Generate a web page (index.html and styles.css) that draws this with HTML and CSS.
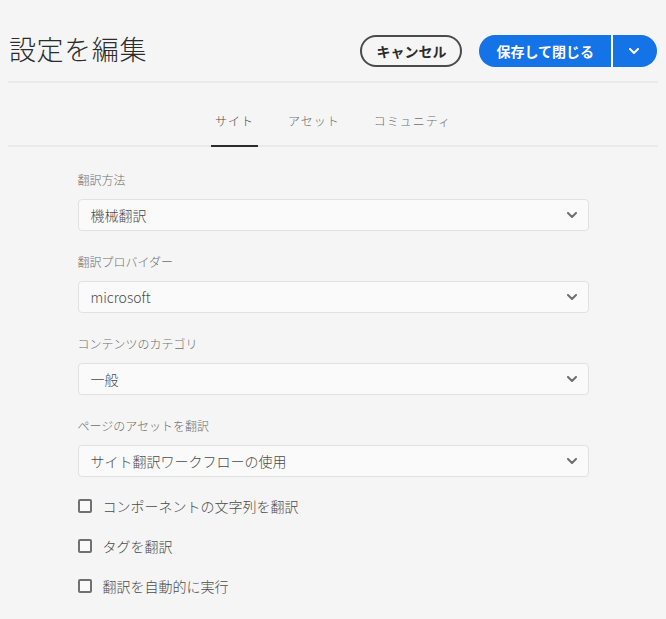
FILE: index.html
```html
<!DOCTYPE html>
<html lang="ja">
<head>
<meta charset="utf-8">
<title>設定を編集</title>
<link rel="stylesheet" href="styles.css">
</head>
<body>
<div class="page">
  <header class="header">
    <h1 class="title">設定を編集</h1>
    <div class="actions">
      <button class="btn-cancel" type="button">キャンセル</button>
      <div class="save-group">
        <button class="btn-save" type="button">保存して閉じる</button>
        <button class="btn-more" type="button" aria-label="その他">
          <svg width="10" height="6" viewBox="0 0 10 6"><path d="M1 1 L5 5 L9 1" fill="none" stroke="#fff" stroke-width="2" stroke-linecap="round" stroke-linejoin="round"/></svg>
        </button>
      </div>
    </div>
  </header>

  <nav class="tabs">
    <div class="tab active">サイト</div>
    <div class="tab">アセット</div>
    <div class="tab">コミュニティ</div>
  </nav>

  <form class="form">
    <div class="field">
      <div class="label">翻訳方法</div>
      <div class="select"><span class="value">機械翻訳</span><svg class="chev" width="10" height="6" viewBox="0 0 10 6"><path d="M1 1 L5 5 L9 1" fill="none" stroke="#6e6e6e" stroke-width="2" stroke-linecap="round" stroke-linejoin="round"/></svg></div>
    </div>
    <div class="field">
      <div class="label">翻訳プロバイダー</div>
      <div class="select"><span class="value">microsoft</span><svg class="chev" width="10" height="6" viewBox="0 0 10 6"><path d="M1 1 L5 5 L9 1" fill="none" stroke="#6e6e6e" stroke-width="2" stroke-linecap="round" stroke-linejoin="round"/></svg></div>
    </div>
    <div class="field">
      <div class="label">コンテンツのカテゴリ</div>
      <div class="select"><span class="value">一般</span><svg class="chev" width="10" height="6" viewBox="0 0 10 6"><path d="M1 1 L5 5 L9 1" fill="none" stroke="#6e6e6e" stroke-width="2" stroke-linecap="round" stroke-linejoin="round"/></svg></div>
    </div>
    <div class="field last">
      <div class="label">ページのアセットを翻訳</div>
      <div class="select"><span class="value">サイト翻訳ワークフローの使用</span><svg class="chev" width="10" height="6" viewBox="0 0 10 6"><path d="M1 1 L5 5 L9 1" fill="none" stroke="#6e6e6e" stroke-width="2" stroke-linecap="round" stroke-linejoin="round"/></svg></div>
    </div>
    <div class="checks">
      <label class="check"><span class="box"></span><span class="check-text">コンポーネントの文字列を翻訳</span></label>
      <label class="check"><span class="box"></span><span class="check-text">タグを翻訳</span></label>
      <label class="check"><span class="box"></span><span class="check-text">翻訳を自動的に実行</span></label>
    </div>
  </form>
</div>
</body>
</html>
```

FILE: styles.css
```css
* { box-sizing: border-box; }

html, body {
  background: #f5f5f5;
}

body {
  margin: 8px;
  font-family: "Noto Sans CJK JP", "Noto Sans", sans-serif;
  color: #4b4b4b;
}

.page {
  width: 650px;
}

.header {
  display: flex;
  align-items: center;
  justify-content: space-between;
  padding: 27px 1px 14px 1px;
  border-bottom: 2px solid #eaeaea;
}

.title {
  margin: 0 0 4px 0;
  font-size: 27px;
  font-weight: 300;
  line-height: 28px;
  letter-spacing: 0.6px;
  color: #2c2c2c;
}

.actions {
  display: flex;
  align-items: center;
  gap: 17px;
}

.btn-cancel {
  height: 32px;
  padding: 0 14px;
  border: 2px solid #4b4b4b;
  border-radius: 16px;
  background: transparent;
  color: #2c2c2c;
  font-family: inherit;
  font-size: 14px;
  font-weight: 700;
  line-height: 28px;
}

.save-group {
  display: flex;
}

.btn-save {
  height: 32px;
  padding: 0 17px;
  border: none;
  border-radius: 16px 0 0 16px;
  background: #1473e6;
  color: #fff;
  font-family: inherit;
  font-size: 14px;
  font-weight: 700;
  line-height: 32px;
}

.btn-more {
  width: 46px;
  height: 32px;
  padding: 0 2px 0 0;
  border: none;
  border-left: 2px solid #ffffff;
  border-radius: 0 16px 16px 0;
  background: #1473e6;
  display: flex;
  align-items: center;
  justify-content: center;
}

.tabs {
  display: flex;
  justify-content: center;
  gap: 26px;
  padding-top: 30px;
  border-bottom: 2px solid #eaeaea;
}

.tab {
  padding: 0 4px 16px;
  margin-bottom: -2px;
  border-bottom: 2px solid transparent;
  font-size: 12px;
  font-weight: 300;
  letter-spacing: 1px;
  line-height: 16px;
  color: #6e6e6e;
}

.tab.active {
  border-bottom-color: #2c2c2c;
  color: #4b4b4b;
}

.form {
  width: 511px;
  margin: 25px auto 0;
}

.field {
  margin-bottom: 23px;
}

.field.last {
  margin-bottom: 13px;
}

.label {
  font-size: 12px;
  font-weight: 300;
  line-height: 16px;
  color: #6e6e6e;
  margin-bottom: 11px;
}

.select {
  display: flex;
  align-items: center;
  justify-content: space-between;
  height: 32px;
  padding: 0 11px 0 12px;
  border: 1px solid #e1e1e1;
  border-radius: 4px;
  background: #fafafa;
}

.value {
  font-size: 14px;
  font-weight: 300;
  color: #4b4b4b;
  line-height: 20px;
}

.checks {
  display: flex;
  flex-direction: column;
  gap: 8px;
}

.check {
  display: flex;
  align-items: center;
  height: 32px;
  gap: 11px;
}

.box {
  width: 14px;
  height: 14px;
  border: 2px solid #707070;
  border-radius: 2px;
  background: #fafafa;
  flex: none;
}

.check-text {
  font-size: 14px;
  font-weight: 300;
  line-height: 20px;
  color: #4b4b4b;
}
```
